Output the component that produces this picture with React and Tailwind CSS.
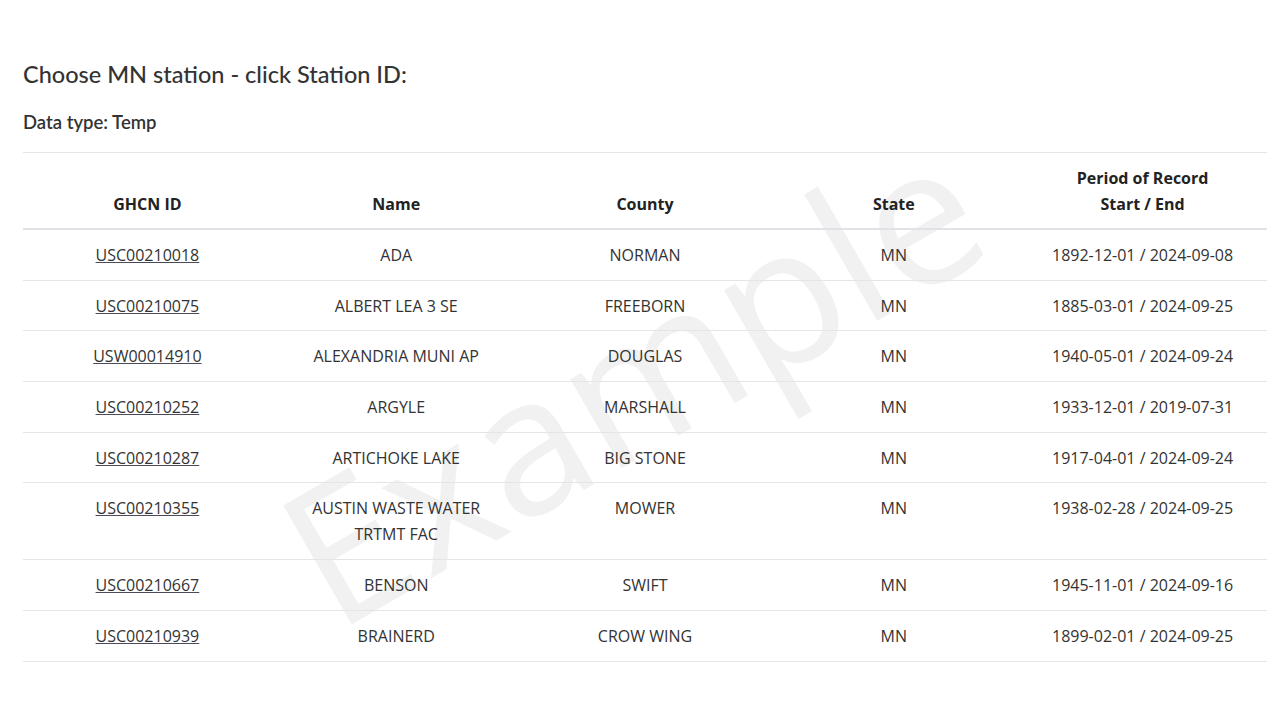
import React from 'react';

const stations = [
  { id: 'USC00210018', name: 'ADA', county: 'NORMAN', state: 'MN', period: '1892-12-01 / 2024-09-08' },
  { id: 'USC00210075', name: 'ALBERT LEA 3 SE', county: 'FREEBORN', state: 'MN', period: '1885-03-01 / 2024-09-25' },
  { id: 'USW00014910', name: 'ALEXANDRIA MUNI AP', county: 'DOUGLAS', state: 'MN', period: '1940-05-01 / 2024-09-24' },
  { id: 'USC00210252', name: 'ARGYLE', county: 'MARSHALL', state: 'MN', period: '1933-12-01 / 2019-07-31' },
  { id: 'USC00210287', name: 'ARTICHOKE LAKE', county: 'BIG STONE', state: 'MN', period: '1917-04-01 / 2024-09-24' },
  { id: 'USC00210355', name: 'AUSTIN WASTE WATER TRTMT FAC', county: 'MOWER', state: 'MN', period: '1938-02-28 / 2024-09-25' },
  { id: 'USC00210667', name: 'BENSON', county: 'SWIFT', state: 'MN', period: '1945-11-01 / 2024-09-16' },
  { id: 'USC00210939', name: 'BRAINERD', county: 'CROW WING', state: 'MN', period: '1899-02-01 / 2024-09-25' }
];

export default function App() {
  return (
    <div className="relative min-h-[720px] w-[1280px] overflow-hidden bg-white pl-[23px] pr-[13px] text-[#333]">
      {/* Watermark */}
      <div className="pointer-events-none absolute left-[630px] top-[378px] z-0 -translate-x-1/2 -translate-y-1/2 rotate-[-30deg] select-none whitespace-nowrap font-['Open_Sans',sans-serif] text-[192px] leading-none text-[#f1f1f1]">
        Example
      </div>

      <div className="relative z-10">
        <h2 className="pt-[61px] font-['Lato','Noto_Sans',sans-serif] text-[23.5px] font-medium leading-[26px] text-[#333]">
          Choose MN station - click Station ID:
        </h2>
        <p className="mt-[23px] font-['Lato','Noto_Sans',sans-serif] text-[18.5px] font-semibold leading-6 text-[#333]">
          Data type: Temp
        </p>

        <table className="mt-[18px] w-full table-fixed border-collapse font-['Open_Sans',sans-serif] text-base leading-[26px]">
          <thead>
            <tr className="border-t border-b-2 border-t-[#e3e5e8] border-b-[#dfe2e6]">
              <th className="px-3 pt-3 pb-[11px] align-bottom font-bold text-[#222]">GHCN ID</th>
              <th className="px-3 pt-3 pb-[11px] align-bottom font-bold text-[#222]">Name</th>
              <th className="px-3 pt-3 pb-[11px] align-bottom font-bold text-[#222]">County</th>
              <th className="px-3 pt-3 pb-[11px] align-bottom font-bold text-[#222]">State</th>
              <th className="px-3 pt-3 pb-[11px] align-bottom font-bold text-[#222]">
                Period of Record
                <br />
                Start / End
              </th>
            </tr>
          </thead>
          <tbody>
            {stations.map((s) => (
              <tr key={s.id} className="border-b border-[#e3e5e8]">
                <td className="px-3 py-[11.85px] text-center align-top">
                  <a href="#" className="text-[#333] underline decoration-[#4a4a5a]">
                    {s.id}
                  </a>
                </td>
                <td className="px-[30px] py-[11.85px] text-center align-top">{s.name}</td>
                <td className="px-3 py-[11.85px] text-center align-top">{s.county}</td>
                <td className="px-3 py-[11.85px] text-center align-top">{s.state}</td>
                <td className="px-3 py-[11.85px] text-center align-top">{s.period}</td>
              </tr>
            ))}
          </tbody>
        </table>
      </div>
    </div>
  );
}
